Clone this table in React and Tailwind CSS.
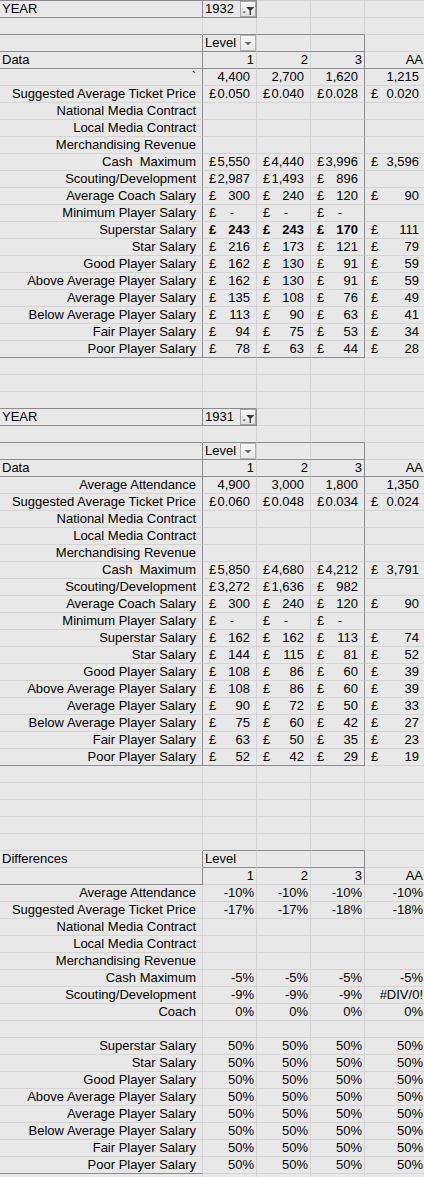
const E = { k: "empty" };
const H = (t) => ({ k: "left", t });
const L = (t) => ({ k: "label", t });
const G = (t) => ({ k: "gen", t });
const N = (t) => ({ k: "num", t });
const C = (t, b) => (t === null ? E : { k: "cur", t, b });

const salaryLabels = [
  "Superstar Salary",
  "Star Salary",
  "Good Player Salary",
  "Above Average Player Salary",
  "Average Player Salary",
  "Below Average Player Salary",
  "Fair Player Salary",
  "Poor Player Salary",
];

function row(cells, rd = [], bd = []) {
  return { cells, rd, bd };
}

function empty(bd = []) {
  return row([E, E, E, E, E], [], bd);
}

function yearTable(year, first, v) {
  const rows = [
    row([H("YEAR"), { k: "year", t: year }, E, E, E], [0, 1], [0, 1]),
    empty([0, 1, 2, 3]),
    row([E, { k: "level", t: "Level" }, E, E, E], [0, 3], [0, 1, 2, 3]),
    row([H("Data"), G("1"), G("2"), G("3"), G("AA")], [0, 3], [0, 1, 2, 3, 4]),
    row([L(first[0]), ...first[1].map(N)], [0, 3]),
    row([L("Suggested Average Ticket Price"), ...v.ticket.map((x) => C(x))], [0, 3]),
    row([L("National Media Contract"), E, E, E, E], [0, 3]),
    row([L("Local Media Contract"), E, E, E, E], [0, 3]),
    row([L("Merchandising Revenue"), E, E, E, E], [0, 3]),
    row([L("Cash  Maximum"), ...v.cash.map((x) => C(x))], [0, 3]),
    row([L("Scouting/Development"), ...v.scout.map((x) => C(x))], [0, 3]),
    row([L("Average Coach Salary"), ...v.coach.map((x) => C(x))], [0, 3]),
    row([L("Minimum Player Salary"), C("-"), C("-"), C("-"), E], [0, 3]),
  ];
  v.salaries.forEach((s, i) => {
    const last = i === v.salaries.length - 1;
    rows.push(
      row(
        [L(salaryLabels[i]), ...s.map((x, j) => C(x, v.bold && i === 0 && j < 3))],
        [0, 3],
        last ? [0, 1, 2, 3] : []
      )
    );
  });
  return rows;
}

const t1932 = yearTable("1932", ["`", ["4,400", "2,700", "1,620", "1,215"]], {
  ticket: ["0.050", "0.040", "0.028", "0.020"],
  cash: ["5,550", "4,440", "3,996", "3,596"],
  scout: ["2,987", "1,493", "896", null],
  coach: ["300", "240", "120", "90"],
  bold: true,
  salaries: [
    ["243", "243", "170", "111"],
    ["216", "173", "121", "79"],
    ["162", "130", "91", "59"],
    ["162", "130", "91", "59"],
    ["135", "108", "76", "49"],
    ["113", "90", "63", "41"],
    ["94", "75", "53", "34"],
    ["78", "63", "44", "28"],
  ],
});

const t1931 = yearTable("1931", ["Average Attendance", ["4,900", "3,000", "1,800", "1,350"]], {
  ticket: ["0.060", "0.048", "0.034", "0.024"],
  cash: ["5,850", "4,680", "4,212", "3,791"],
  scout: ["3,272", "1,636", "982", null],
  coach: ["300", "240", "120", "90"],
  bold: false,
  salaries: [
    ["162", "162", "113", "74"],
    ["144", "115", "81", "52"],
    ["108", "86", "60", "39"],
    ["108", "86", "60", "39"],
    ["90", "72", "50", "33"],
    ["75", "60", "42", "27"],
    ["63", "50", "35", "23"],
    ["52", "42", "29", "19"],
  ],
});

const pct = (label, vals, bd = []) => row([L(label), ...vals.map(G)], [], bd);
const fifty = ["50%", "50%", "50%", "50%"];

const diffs = [
  row([H("Differences"), { k: "left", t: "Level" }, E, E, E], [0, 3], [1, 2, 3]),
  row([E, G("1"), G("2"), G("3"), G("AA")], [0, 3], [0]),
  pct("Average Attendance", ["-10%", "-10%", "-10%", "-10%"]),
  pct("Suggested Average Ticket Price", ["-17%", "-17%", "-18%", "-18%"]),
  row([L("National Media Contract"), E, E, E, E]),
  row([L("Local Media Contract"), E, E, E, E]),
  row([L("Merchandising Revenue"), E, E, E, E]),
  pct("Cash Maximum", ["-5%", "-5%", "-5%", "-5%"]),
  pct("Scouting/Development", ["-9%", "-9%", "-9%", "#DIV/0!"]),
  pct("Coach", ["0%", "0%", "0%", "0%"]),
  empty(),
  ...salaryLabels.map((l, i) => pct(l, fifty, i === salaryLabels.length - 1 ? [0] : [])),
];

const sheet = [
  ...t1932,
  empty(),
  empty(),
  empty([0, 1]),
  ...t1931,
  empty(),
  empty(),
  empty(),
  empty(),
  empty([1, 2, 3]),
  ...diffs,
  empty(),
];

// pivot filter button (funnel + small arrow)
function FilterButton() {
  return (
    <div className="absolute right-0 top-0 w-[16px] h-[16px] border border-[#a6a6a6] bg-gradient-to-b from-[#fbfbfb] to-[#e2e2e2]">
      <svg width="14" height="14" viewBox="0 0 14 14" className="block">
        <path d="M5 5h8.5L10 8.6V13H8.6V8.6z" fill="#3a3a3a" />
        <path d="M1.5 9.5h3.5l-1.75 2z" fill="#5a5a5a" />
      </svg>
    </div>
  );
}

function DropButton() {
  return (
    <div className="absolute right-0 top-0 w-[16px] h-[16px] border border-[#b4b4b4] bg-gradient-to-b from-[#fbfbfb] to-[#e6e6e6]">
      <svg width="14" height="14" viewBox="0 0 14 14" className="block">
        <path d="M3.5 6h7L7 9.5z" fill="#707070" />
      </svg>
    </div>
  );
}

function Cell({ c, dr, db }) {
  const br = dr ? "border-r-[#8c8c8c]" : "border-r-[#d4d4d4]";
  const bb = db ? "border-b-[#8c8c8c]" : "border-b-[#d4d4d4]";
  const base = `relative h-[17px] border-r border-b ${br} ${bb} overflow-hidden whitespace-pre leading-[16px]`;

  if (c.k === "left") return <div className={`${base} pl-[2px]`}>{c.t}</div>;
  if (c.k === "year")
    return (
      <div className={`${base} pl-[2px]`}>
        {c.t}
        <FilterButton />
      </div>
    );
  if (c.k === "level")
    return (
      <div className={`${base} pl-[2px]`}>
        {c.t}
        <DropButton />
      </div>
    );
  if (c.k === "label") return <div className={`${base} text-right pr-[6px]`}>{c.t}</div>;
  if (c.k === "gen") return <div className={`${base} text-right pr-[2px]`}>{c.t}</div>;
  if (c.k === "num") return <div className={`${base} text-right pr-[6px]`}>{c.t}</div>;
  if (c.k === "cur")
    return (
      <div className={`${base} flex justify-between pl-[6px] pr-[6px] ${c.b ? "font-bold" : ""}`}>
        <span>£</span>
        {c.t === "-" ? <span className="mr-[16px]">-</span> : <span>{c.t}</span>}
      </div>
    );
  return <div className={base} />;
}

export default function App() {
  return (
    <div className="w-[424px] h-[1177px] overflow-hidden bg-[#e8e8e8] text-black text-[13px] font-['Liberation_Sans',Arial,sans-serif]">
      <div className="grid grid-cols-[203px_54px_54px_54px_61px] w-[426px]">
        <div className="h-px bg-[#8c8c8c]" />
        <div className="h-px bg-[#8c8c8c]" />
        <div className="h-px bg-[#d4d4d4]" />
        <div className="h-px bg-[#d4d4d4]" />
        <div className="h-px bg-[#d4d4d4]" />
        {sheet.map((r, i) =>
          r.cells.map((c, j) => (
            <Cell key={`${i}-${j}`} c={c} dr={r.rd.includes(j)} db={r.bd.includes(j)} />
          ))
        )}
      </div>
    </div>
  );
}
